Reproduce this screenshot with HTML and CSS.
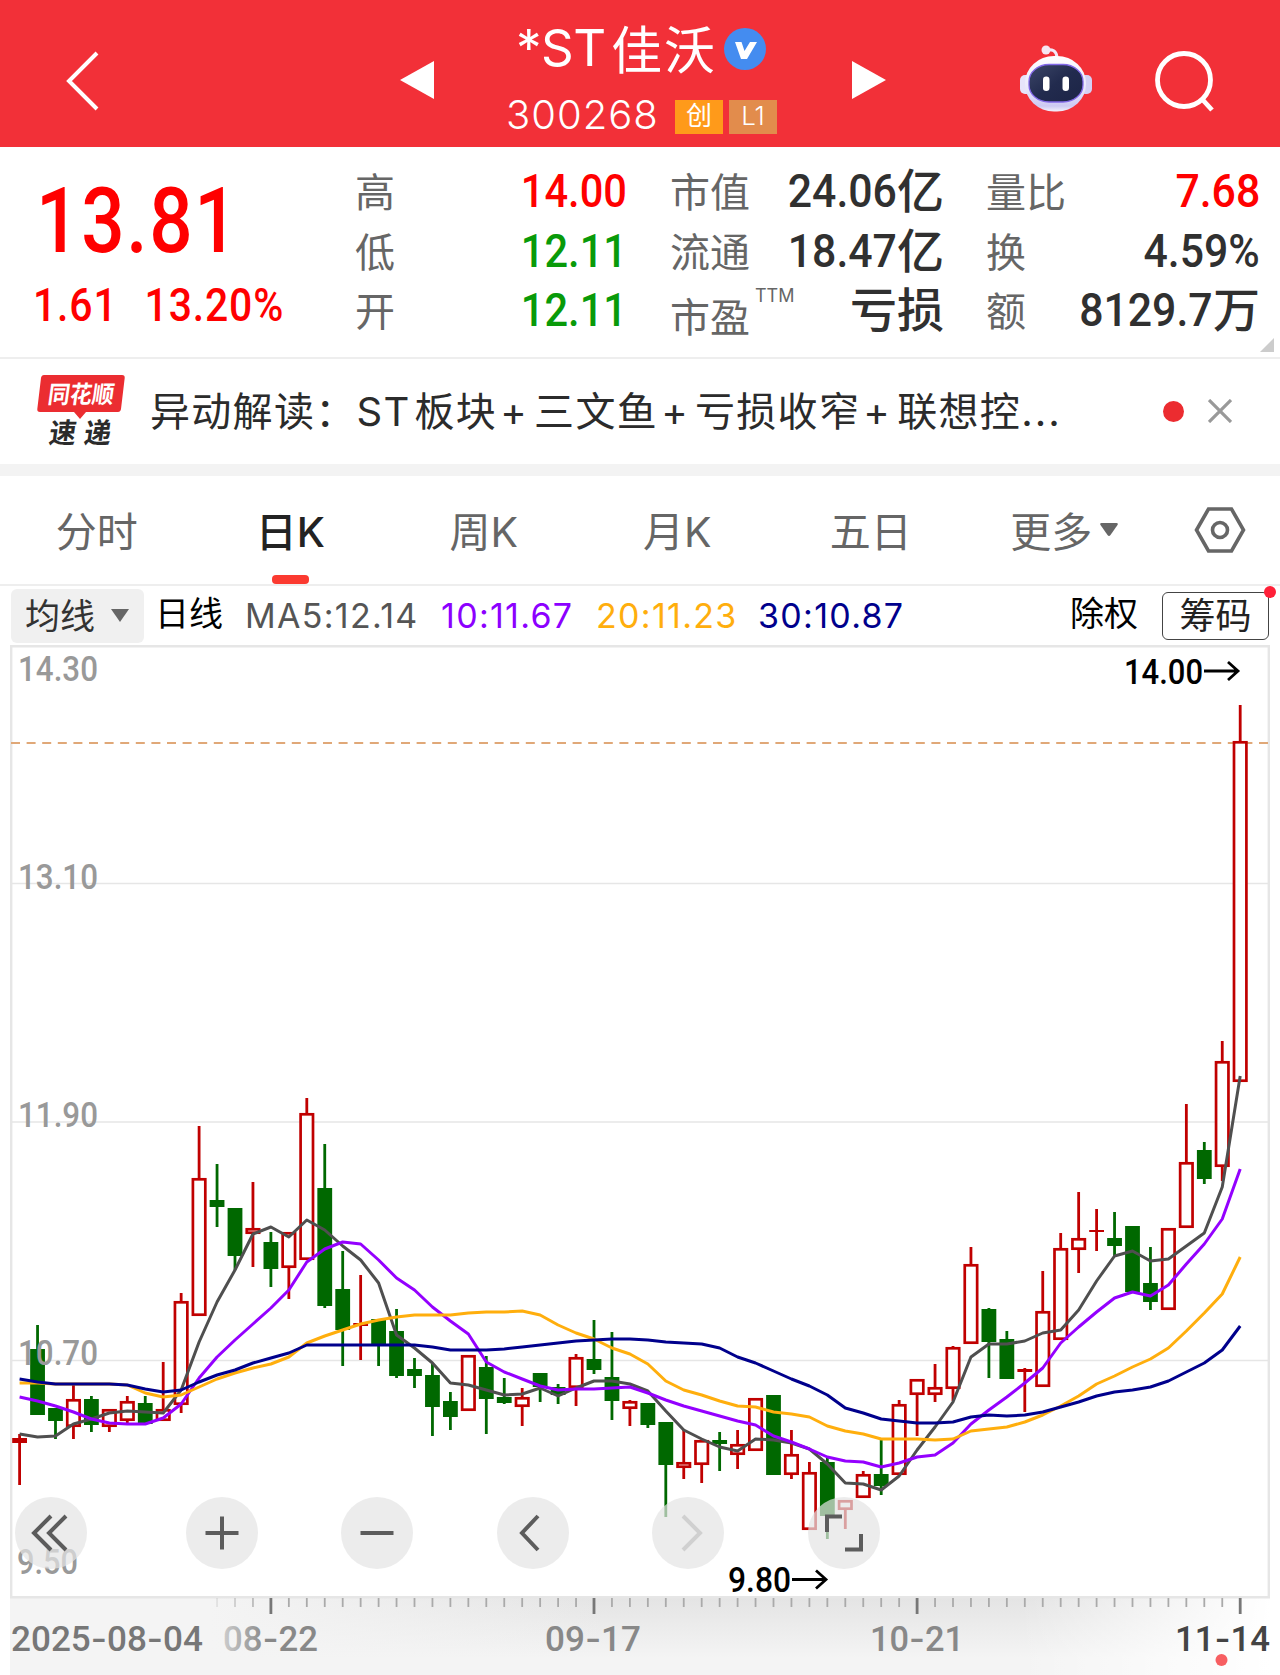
FILE: index.html
```html
<!DOCTYPE html>
<html lang="zh-CN">
<head>
  <meta charset="UTF-8">
  <title>*ST佳沃 300268</title>
  <link rel="stylesheet" href="styles.css">
</head>
<body>
  <header class="topbar">
    <svg class="back" width="34" height="62" viewBox="0 0 34 62"><path d="M31 3 L3 31 L31 59"/></svg>
    <svg class="prev" width="34" height="38" viewBox="0 0 34 38"><path d="M34 0 V38 L0 19 Z"/></svg>
    <div class="stock">
      <div class="name"><span>*ST</span><span class="cn">佳沃</span>
        <svg width="42" height="42" viewBox="0 0 42 42"><circle cx="21" cy="21" r="21" fill="#448cf0"/><path d="M11 14 H17.5 L20.5 23 L26 14 H33 L23 31 H17 Z" fill="#fff"/></svg>
      </div>
      <div class="code"><span>300268</span><i class="tag">创</i><i class="tag l1">L1</i></div>
    </div>
    <svg class="next" width="34" height="38" viewBox="0 0 34 38"><path d="M0 0 V38 L34 19 Z"/></svg>
    <svg class="robot" width="72" height="68" viewBox="0 0 72 68">
      <defs>
        <linearGradient id="head" x1="0" y1="0" x2="0" y2="1"><stop offset="0" stop-color="#fff"/><stop offset=".6" stop-color="#e8e6fa"/><stop offset=".9" stop-color="#cdc9f3"/><stop offset="1" stop-color="#f4f1fc"/></linearGradient>
        <linearGradient id="face" x1="0" y1="0" x2="1" y2="1"><stop offset="0" stop-color="#3c4668"/><stop offset=".5" stop-color="#222b4e"/><stop offset="1" stop-color="#1c2446"/></linearGradient>
      </defs>
      <path d="M26 5 Q36 3 37 12" fill="none" stroke="#f3e9f8" stroke-width="3"/>
      <circle cx="26" cy="5" r="4.5" fill="#f6e6f2"/>
      <rect x="0" y="30" width="12" height="19" rx="5" fill="#e6e3fa"/>
      <rect x="60" y="30" width="12" height="19" rx="5" fill="#d4d0f4"/>
      <rect x="5" y="11" width="61" height="55.500" rx="29" ry="27" fill="url(#head)"/>
      <rect x="9" y="19.500" width="54" height="37.500" rx="20" ry="17" fill="url(#face)" stroke="#8268e8" stroke-width="1.3"/>
      <rect x="23" y="31.500" width="6.500" height="14.500" rx="3.2" fill="#fff"/>
      <rect x="42.500" y="31.500" width="6.500" height="14.500" rx="3.2" fill="#fff"/>
    </svg>
    <svg class="search" width="62" height="62" viewBox="0 0 62 62"><circle cx="30" cy="30" r="26.5"/><path d="M47.500 48.500 L58 60"/></svg>
  </header>

  <section class="quote">
    <div class="price">
      <div class="last">13.81</div>
      <div class="change"><span>1.61</span><span>13.20%</span></div>
    </div>
    <dl class="c1">
      <dt>高</dt><dd class="up"><b>14.00</b></dd>
      <dt>低</dt><dd class="down"><b>12.11</b></dd>
      <dt>开</dt><dd class="down"><b>12.11</b></dd>
    </dl>
    <dl class="c2">
      <dt>市值</dt><dd><b>24.06</b>亿</dd>
      <dt>流通</dt><dd><b>18.47</b>亿</dd>
      <dt class="pe">市盈<sup>TTM</sup></dt><dd>亏损</dd>
    </dl>
    <dl class="c3">
      <dt>量比</dt><dd class="up"><b>7.68</b></dd>
      <dt>换</dt><dd><b>4.59%</b></dd>
      <dt>额</dt><dd><b>8129.7</b>万</dd>
    </dl>
    <i class="corner"></i>
  </section>

  <section class="news">
    <svg class="logo" width="92" height="90" viewBox="36 365 92 90">
      <path d="M44 374 H122 Q125 374 124.700 377 L121 408 Q120.500 411 118 411 H86 L80 418 L74 411 H40 Q37 411 37.300 408 L41 377 Q41.500 374 44 374 Z" fill="#eb2d31"/>
      <text transform="translate(47 402) skewX(-8)" textLength="66" lengthAdjust="spacingAndGlyphs" font-size="24" fill="#fff">同花顺</text>
      <g transform="translate(48 442) skewX(-8)" font-size="28" fill="#2b2b2b"><text textLength="27" lengthAdjust="spacingAndGlyphs">速</text><text x="35" textLength="27" lengthAdjust="spacingAndGlyphs">递</text></g>
    </svg>
    <p>异动解读：<span class="st">ST</span>板块<span class="plus">+</span>三文鱼<span class="plus">+</span>亏损收窄<span class="plus">+</span>联想控<span class="dots">...</span></p>
    <i class="dot"></i>
    <svg class="close" width="24" height="24" viewBox="0 0 24 24"><path d="M1 1 L23 23 M23 1 L1 23"/></svg>
  </section>

  <nav class="tabs">
    <a>分时</a>
    <a class="active">日K</a>
    <a>周K</a>
    <a>月K</a>
    <a>五日</a>
    <a>更多<svg width="18" height="13" viewBox="0 0 18 13"><path d="M1.500 0 H16.500 Q18.500 0 17.500 2 L10.500 12 Q9 14 7.500 12 L.5 2 Q-.5 0 1.500 0Z" fill="#666"/></svg></a>
    <svg class="gear" width="52" height="46" viewBox="0 0 52 46"><path d="M14.500 2 H37.500 L49.500 23 L37.500 44 H14.500 L2.500 23 Z"/><circle cx="26" cy="23" r="7.500"/></svg>
  </nav>

  <div class="mabar">
    <span class="select">均线<svg width="18" height="13" viewBox="0 0 18 13"><path d="M0 0 H18 L9 13 Z" fill="#666"/></svg></span>
    <span class="day">日线</span>
    <span class="ma m5">MA5:12.14</span>
    <span class="ma m10">10:11.67</span>
    <span class="ma m20">20:11.23</span>
    <span class="ma m30">30:10.87</span>
    <span class="right">除权</span>
    <span class="chips">筹码</span>
  </div>

  <div class="chart">
    <svg id="kline" width="1280" height="1030" viewBox="0 645 1280 1030">
      <defs>
        <linearGradient id="shade" x1="0" y1="0" x2="0" y2="1"><stop offset="0" stop-color="#e4e4e4"/><stop offset="1" stop-color="#f4f4f4"/></linearGradient>
        <linearGradient id="fadeL"><stop offset="0" stop-color="#f4f4f4"/><stop offset="1" stop-color="#f4f4f4" stop-opacity="0"/></linearGradient>
        <linearGradient id="fadeR"><stop offset="0" stop-color="#fff" stop-opacity="0"/><stop offset="1" stop-color="#fff"/></linearGradient>
      </defs>
      <rect x="10" y="1598" width="1260" height="77" fill="#f4f4f4"/>
      <rect x="210" y="1598" width="1060" height="60" fill="url(#shade)"/>
      <rect x="209" y="1598" width="400" height="77" fill="url(#fadeL)"/>
      <rect x="1020" y="1598" width="250" height="77" fill="url(#fadeR)"/>
      <path class="grid" d="M11 883.500 H1269 M11 1122 H1269 M11 1360.500 H1269"/>
      <path class="frame" d="M11.200 646.200 H1268.800 V1597.200 H11.200 Z"/>
      <path class="latest" d="M11 743 H1269"/>
      <g id="candles"></g>
      <g id="lines"></g>
      <g id="labels"></g>
      <path class="arrow" d="M1204 671 H1237 M1228 662 L1238 671 L1228 680"/>
      <path class="arrow" d="M792 1579.500 H825 M816 1570.500 L826 1579.500 L816 1588.500"/>
      <g id="ticks"></g>
      <circle cx="1221.500" cy="1660" r="6" fill="#f75f62"/>
    </svg>
    <div class="tools">
      <svg viewBox="0 0 72 72"><path d="M36 19 L19 36 L36 53 M51 19 L34 36 L51 53"/></svg>
      <svg viewBox="0 0 72 72"><path d="M36 19.500 V52.500 M19.500 36 H52.500"/></svg>
      <svg viewBox="0 0 72 72"><path d="M19.500 36 H52.500"/></svg>
      <svg viewBox="0 0 72 72"><path d="M41 19 L25 36 L41 53"/></svg>
      <svg class="off" viewBox="0 0 72 72"><path d="M31 19 L48 36 L31 53"/></svg>
      <svg viewBox="0 0 72 72"><path d="M19 35 V19.500 H34 M53 37 V52.500 H37"/></svg>
    </div>
  </div>
  <script src="chart.js"></script>
</body>
</html>
```
FILE: styles.css
```css
* {
  box-sizing: border-box;
}
body {
  margin: 0;
  width: 1280px;
  background: #fff;
  color: #303030;
  font-family: Inter, "Noto Sans CJK SC", sans-serif;
}
svg {
  display: block;
  flex: none;
}
i {
  font-style: normal;
}

/* header */
.topbar {
  height: 147px;
  display: flex;
  align-items: center;
  background: #f23038;
  color: #fff;
}
.topbar .back {
  margin: 14px 0 0 66px;
}
.back path, .search path, .search circle {
  fill: none;
  stroke: #fff;
  stroke-width: 4;
}
.search path, .search circle {
  stroke-width: 4.8;
}
.prev, .next {
  fill: #fff;
  margin-top: 13px;
}
.prev {
  margin-left: 300px;
}
.stock {
  width: 418px;
  height: 147px;
  padding-top: 18px;
}
.name {
  display: flex;
  align-items: center;
  height: 62px;
  padding-left: 82px;
  font-size: 51px;
}
.name span {
  width: 95px;
  margin-top: -4px;
  white-space: nowrap;
  letter-spacing: -0.5px;
}
.name .cn {
  width: 113px;
  letter-spacing: 2px;
}
.code {
  display: flex;
  align-items: center;
  height: 44px;
  margin-top: 13px;
  padding-left: 72px;
  font-size: 40px;
}
.code span {
  width: 169px;
  margin-top: -1px;
  font-weight: 350;
  letter-spacing: 1px;
}
.tag {
  width: 48px;
  height: 34px;
  margin-top: 4px;
  background: #ff9a1a;
  font-size: 26px;
  line-height: 32px;
  text-align: center;
}
.tag.l1 {
  margin-left: 6px;
  background: #e28c4c;
  font-weight: 300;
}
.robot {
  margin: 11px 0 0 134px;
}
.search {
  margin: 15px 0 0 62px;
}

/* quote */
.quote {
  position: relative;
  display: flex;
  height: 212px;
  padding-top: 17px;
  border-bottom: 2px solid #eee;
}
.price {
  width: 356px;
  padding-left: 36px;
  color: #f00;
  font-family: Roboto, sans-serif;
  font-weight: 500;
}
.last {
  height: 112px;
  font-size: 91px;
  line-height: 114px;
  letter-spacing: 2px;
  transform: scaleX(0.84);
  transform-origin: left;
}
.change {
  display: flex;
  gap: 31px;
  margin: -1px 0 0 -3px;
  font-size: 47px;
  line-height: 60px;
  letter-spacing: 1px;
  transform: scaleX(0.87);
  transform-origin: left;
}
dl {
  display: grid;
  grid-template-rows: repeat(3, 59.5px);
  margin: 0;
  line-height: 58px;
}
.c1 {
  grid-template-columns: 109px 163px;
  margin: 0 43px 0 -1px;
}
.c2 {
  grid-template-columns: 90px 184px;
  margin-right: 42px;
}
.c3 {
  grid-template-columns: 90px 184px;
}
dt {
  font-size: 40px;
  color: #666;
  white-space: nowrap;
}
dd {
  display: flex;
  justify-content: flex-end;
  margin: -2px 0 0;
  font-size: 47px;
  font-weight: 500;
  white-space: nowrap;
}
dd b {
  font-family: Roboto, sans-serif;
  font-weight: 500;
  transform: scaleX(0.91);
  transform-origin: right;
}
.c1 b {
  transform: scaleX(0.885);
}
.up {
  color: #f00;
}
.down {
  color: #099a09;
}
.pe {
  padding-top: 4px;
}
sup {
  display: inline-block;
  margin-left: 5px;
  font-size: 18px;
  line-height: 18px;
  vertical-align: 30px;
}
.corner {
  position: absolute;
  right: 6px;
  bottom: 5px;
  border: 7.5px solid #ccc;
  border-top-color: transparent;
  border-left-color: transparent;
}

/* news strip */
.news {
  display: flex;
  align-items: center;
  height: 117px;
  border-bottom: 12px solid #f3f3f3;
}
.logo {
  margin-left: 36px;
  margin-top: -2px;
  font-family: "Noto Sans CJK SC", sans-serif;
  font-weight: 700;
}
.news p {
  width: 910px;
  margin: -5px 0 0 22px;
  color: #2b2b2b;
  font-size: 40px;
  letter-spacing: 1.3px;
  white-space: nowrap;
}
.news p span {
  display: inline-block;
}
.st {
  width: 58px;
}
.plus {
  width: 37px;
  padding-right: 3px;
  text-align: center;
}
.dots {
  letter-spacing: 2px;
}
.dot {
  width: 21px;
  height: 21px;
  margin: -1px 0 0 103px;
  border-radius: 50%;
  background: #ec2c30;
}
.close {
  margin: -1px 0 0 24px;
  stroke: #999;
  stroke-width: 3.2;
}

/* tabs */
.tabs {
  display: grid;
  grid-template-columns: repeat(6, 193.5px) 1fr;
  align-items: center;
  height: 110px;
  border-bottom: 2px solid #eee;
  color: #666;
  font-size: 41px;
}
.tabs a {
  position: relative;
  display: flex;
  align-items: center;
  justify-content: center;
  height: 108px;
  padding-bottom: 3px;
}
.tabs a svg {
  margin: 1px 0 0 8px;
}
.tabs .active {
  color: #222;
  font-weight: 500;
}
.active::after {
  content: "";
  position: absolute;
  bottom: 0;
  left: 78px;
  width: 37px;
  height: 9px;
  border-radius: 4px;
  background: #fb3a30;
}
.gear {
  margin-left: 33px;
  fill: none;
  stroke: #666;
  stroke-width: 3.6;
}

/* moving averages */
.mabar {
  display: flex;
  align-items: center;
  height: 59px;
  font-size: 34px;
  line-height: 54px;
  color: #000;
  white-space: nowrap;
}
.select {
  display: flex;
  align-items: center;
  width: 133px;
  height: 54px;
  margin-left: 11px;
  padding-left: 14px;
  border-radius: 6px;
  background: #f0f0f0;
  color: #333;
  font-size: 35px;
}
.select svg {
  margin-left: 16px;
}
.day {
  width: 90px;
  margin: -3px 0 0 11px;
}
.ma {
  letter-spacing: 1.3px;
}
.m5 {
  width: 196px;
  color: #555;
}
.m10 {
  width: 155px;
  color: #8c00ff;
}
.m20 {
  width: 162px;
  color: #ffae0d;
}
.m30 {
  width: 312px;
  color: #00008c;
}
.right {
  width: 92px;
  margin-top: -3px;
}
.chips {
  position: relative;
  width: 107px;
  height: 48px;
  border: 1.5px solid #444;
  border-radius: 6px;
  color: #222;
  font-size: 36px;
  line-height: 46px;
  text-align: center;
}
.chips::after {
  content: "";
  position: absolute;
  top: -7px;
  right: -8px;
  width: 12px;
  height: 12px;
  border-radius: 50%;
  background: #ff2038;
}

/* chart */
.chart {
  position: relative;
}
.grid {
  stroke: #e6e6e6;
  stroke-width: 1.6;
}
.frame {
  fill: none;
  stroke: #e6e6e6;
  stroke-width: 2.4;
}
.latest {
  stroke: #e0a878;
  stroke-width: 1.8;
  stroke-dasharray: 9 6.6;
}
.arrow {
  fill: none;
  stroke: #000;
  stroke-width: 2.8;
}
#lines polyline {
  fill: none;
  stroke-width: 3;
  stroke-linejoin: round;
}
#labels {
  font-family: Roboto, sans-serif;
  font-weight: 500;
  font-size: 35px;
}
.tools {
  position: absolute;
  top: 852px;
  left: 15px;
  display: flex;
  gap: 83.5px;
}
.tools svg {
  width: 72px;
  height: 72px;
  border-radius: 50%;
  background: rgba(228, 228, 228, 0.7);
  fill: none;
  stroke: #5c5c5c;
  stroke-width: 4;
}
.tools svg:first-child {
  margin-right: 15px;
}
.tools .off {
  stroke: #d0d0d0;
}
```
FILE: chart.js
```js
const X0 = 19.6, STEP = 17.95;
const RED = "#c00000", GREEN = "#006800";

// [up, high, body top, body bottom, low]
const candles = [
  [1,1434,1438,1443,1485],[0,1325,1349,1415,1415],[0,1408,1408,1421,1439],[1,1385,1399,1427,1439],
  [0,1396,1399,1425,1432],[1,1409,1409,1427,1432],[1,1396,1401,1421,1425],[0,1396,1403,1424,1425],
  [1,1362,1409,1421,1421],[1,1293,1301,1405,1413],[1,1126,1178,1316,1316],[0,1164,1200,1207,1227],
  [0,1208,1208,1256,1270],[1,1182,1228,1234,1267],[0,1232,1242,1269,1287],[1,1232,1232,1268,1299],
  [1,1098,1113,1260,1260],[0,1144,1188,1306,1308],[0,1251,1289,1330,1366],[1,1275,1323,1326,1360],
  [0,1319,1319,1346,1366],[0,1309,1331,1376,1378],[0,1358,1369,1376,1388],[0,1363,1375,1407,1436],
  [0,1392,1401,1417,1430],[1,1355,1355,1411,1411],[0,1356,1367,1399,1434],[0,1378,1397,1403,1404],
  [1,1388,1397,1407,1426],[0,1373,1373,1387,1402],[0,1384,1387,1395,1404],[1,1354,1357,1388,1406],
  [0,1320,1359,1370,1374],[0,1332,1377,1401,1420],[1,1400,1401,1409,1426],[0,1403,1403,1425,1428],
  [0,1422,1422,1465,1517],[1,1430,1462,1468,1479],[1,1440,1440,1465,1483],[0,1432,1440,1444,1471],
  [1,1430,1444,1455,1469],[1,1398,1398,1451,1451],[0,1395,1395,1475,1475],[1,1430,1454,1475,1479],
  [1,1462,1472,1530,1530],[0,1457,1462,1516,1539],[1,1500,1500,1510,1529],[1,1471,1474,1498,1498],
  [0,1439,1474,1486,1495],[1,1400,1404,1475,1475],[1,1379,1379,1395,1436],[1,1364,1387,1395,1402],
  [1,1346,1347,1389,1401],[1,1247,1264,1344,1344],[0,1308,1309,1342,1378],[0,1331,1339,1379,1379],
  [1,1368,1369,1372,1412],[1,1271,1311,1387,1387],[1,1233,1248,1340,1340],[1,1192,1238,1250,1273],
  [1,1209,1230,1232,1251],[0,1212,1238,1246,1256],[0,1226,1226,1292,1292],[0,1247,1283,1302,1310],
  [1,1228,1228,1310,1310],[1,1104,1162,1228,1228],[0,1142,1150,1179,1184],[1,1041,1061,1167,1181],
  [1,705,741,1082,1082]
];

const averages = {
  "#4f4f4f": [1434,1437,1436,1424,1419,1413,1411,1412,1413,1390,1342,1302,1270,1234,1227,1237,1220,1230,1246,1260,1283,1335,1348,1363,1383,1385,1390,1395,1394,1388,1396,1388,1381,1381,1384,1391,1411,1430,1439,1447,1451,1439,1440,1443,1449,1464,1483,1484,1490,1476,1450,1427,1402,1357,1344,1344,1341,1333,1330,1310,1281,1256,1251,1261,1259,1246,1233,1187,1076],
  "#9400ff": [1397,1401,1406,1412,1419,1423,1424,1424,1418,1404,1378,1357,1340,1324,1308,1290,1262,1249,1242,1244,1260,1278,1290,1307,1321,1334,1362,1372,1379,1386,1390,1389,1389,1388,1387,1393,1400,1406,1411,1416,1421,1425,1436,1442,1449,1457,1461,1462,1467,1463,1457,1455,1443,1424,1410,1397,1383,1368,1343,1327,1312,1298,1292,1296,1285,1264,1244,1219,1169],
  "#ffae0d": [1383,1383,1384,1384,1384,1384,1385,1393,1397,1395,1387,1379,1373,1368,1364,1357,1343,1336,1330,1324,1320,1317,1315,1315,1315,1313,1312,1312,1311,1315,1325,1333,1339,1348,1354,1364,1381,1390,1395,1401,1406,1407,1412,1414,1417,1426,1431,1434,1439,1439,1439,1440,1439,1431,1429,1427,1422,1415,1406,1396,1384,1376,1367,1359,1348,1331,1313,1294,1257],
  "#00008c": [1379,1382,1384,1384,1384,1384,1385,1389,1392,1390,1382,1375,1370,1363,1358,1353,1345,1345,1345,1345,1345,1345,1345,1347,1350,1350,1350,1349,1347,1345,1343,1341,1340,1339,1339,1340,1342,1343,1344,1348,1357,1363,1371,1379,1386,1395,1408,1413,1419,1421,1423,1423,1422,1417,1415,1416,1415,1412,1407,1402,1396,1392,1390,1387,1381,1372,1363,1350,1326]
};

// [text, x, baseline, width, color]
const labels = [
  ["14.30", 18, 681, 80, "#999"], ["13.10", 18, 889, 80, "#999"],
  ["11.90", 18, 1127, 80, "#999"], ["10.70", 18, 1365, 80, "#999"],
  ["9.50", 17, 1574, 61, "#999"],
  ["14.00", 1124, 684, 79, "#000"], ["9.80", 728, 1592, 63, "#000"],
  ["2025-08-04", 11, 1651, 192, "#777"], ["08-22", 223, 1651, 95, "url(#dateFade)"],
  ["09-17", 545, 1651, 96, "#888"], ["10-21", 870, 1651, 94, "#888"],
  ["11-14", 1175, 1651, 95, "#444"]
];

let out = "";
candles.forEach(([up, hi, top, bot, lo], i) => {
  const x = X0 + i * STEP;
  const color = up ? RED : GREEN;
  out += `<path d="M${x} ${hi} V${top + 1} M${x} ${bot - 1} V${lo}" stroke="${color}" stroke-width="2.8"/>`;
  if (up && bot - top > 5) {
    out += `<rect x="${x - 6.2}" y="${top + 1.3}" width="12.4" height="${bot - top - 2.6}" fill="#fff" stroke="${color}" stroke-width="2.7"/>`;
  } else {
    out += `<rect x="${x - 7.4}" y="${top}" width="14.8" height="${bot - top}" fill="${color}"/>`;
  }
});
document.getElementById("candles").innerHTML = out;

document.getElementById("lines").innerHTML = Object.entries(averages).map(([color, ys]) =>
  `<polyline stroke="${color}" points="${ys.map((y, i) => (X0 + i * STEP) + "," + y).join(" ")}"/>`
).join("");

const fade = `<linearGradient id="dateFade"><stop offset="0" stop-color="#ccc"/><stop offset=".45" stop-color="#888"/></linearGradient>`;
document.getElementById("labels").innerHTML = fade + labels.map(([t, x, y, w, color]) =>
  `<text x="${x}" y="${y}" textLength="${w}" lengthAdjust="spacingAndGlyphs" fill="${color}">${t.replace(/-/g, '<tspan font-family="Inter">-</tspan>')}</text>`
).join("");

out = "";
for (let i = 11; i < 69; i++) {
  const major = (i - 14) % 18 === 0;
  out += `<path d="M${X0 + i * STEP} 1598 V${major ? 1614 : 1607}" stroke="${major ? "#777" : "#aaa"}" stroke-width="${major ? 2.8 : 1.8}" opacity="${i < 14 ? (i - 10) / 4 : 1}"/>`;
}
document.getElementById("ticks").innerHTML = out;
```
